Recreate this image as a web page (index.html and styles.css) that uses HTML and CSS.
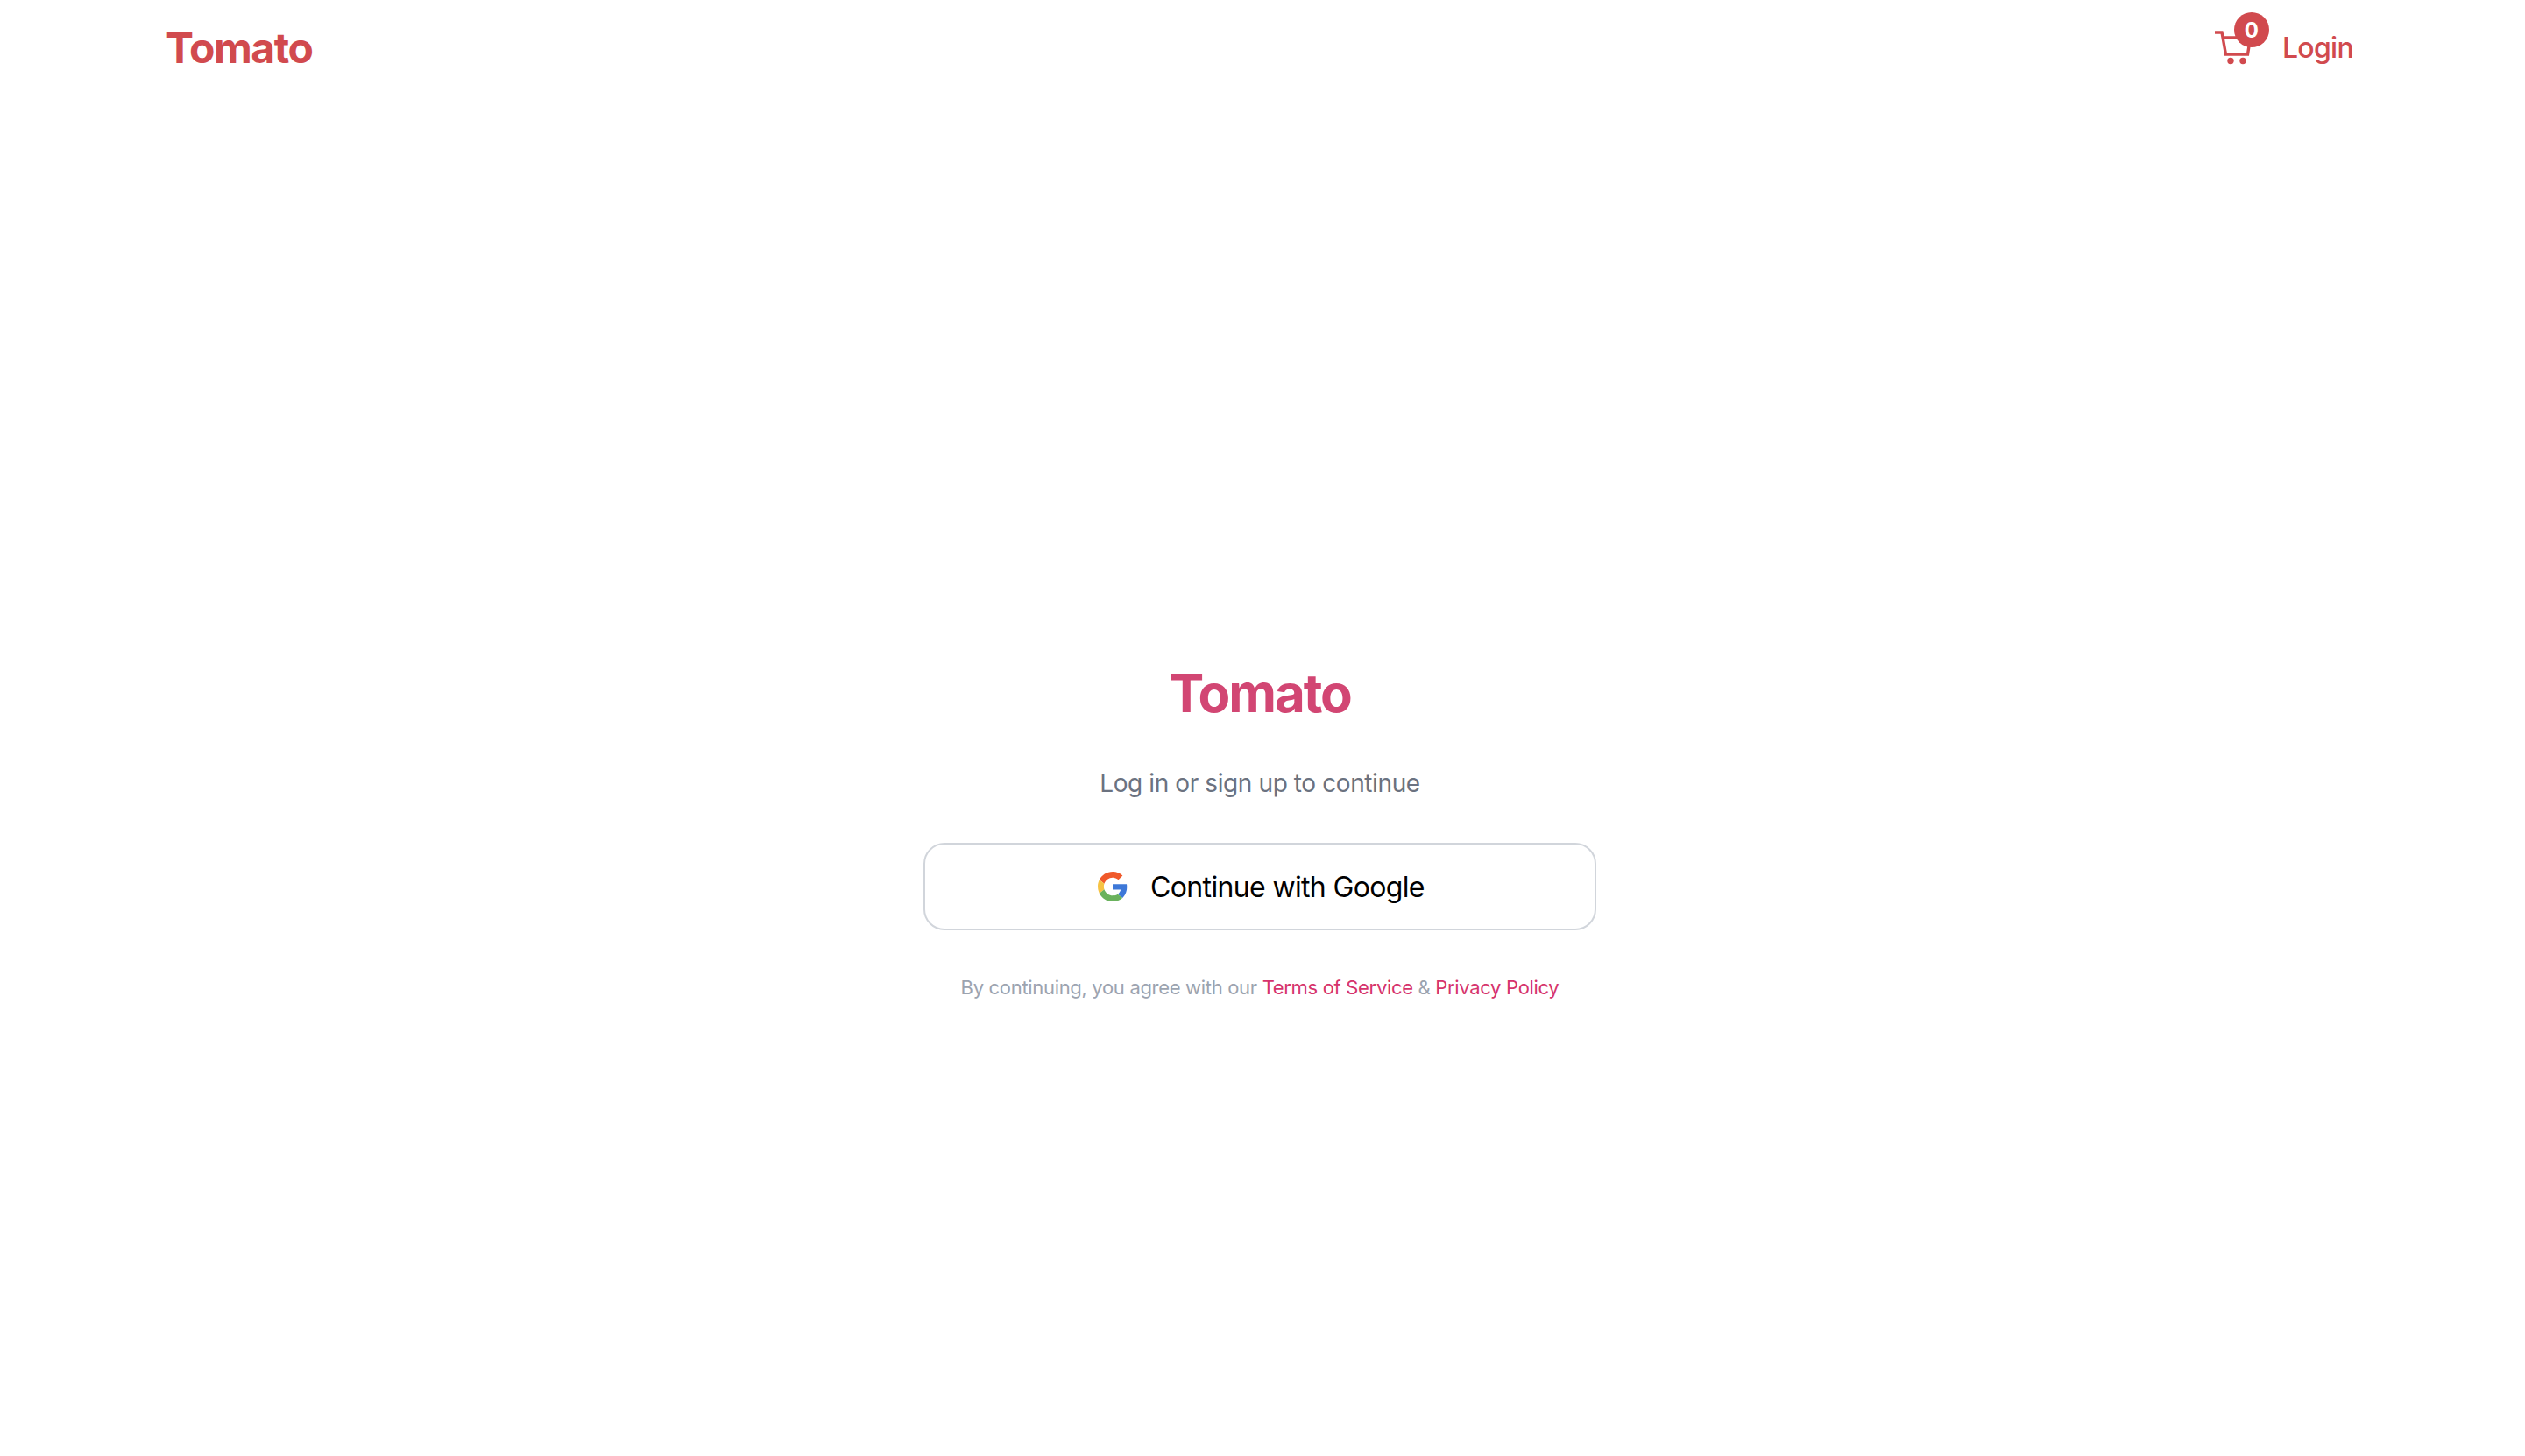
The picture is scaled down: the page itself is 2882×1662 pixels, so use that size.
FILE: index.html
```html
<!DOCTYPE html>
<html lang="en">
<head>
<meta charset="utf-8">
<title>Tomato</title>
<link rel="stylesheet" href="styles.css">
</head>
<body>
<header class="nav">
  <a class="brand">Tomato</a>
  <div class="nav-right">
    <span class="cart">
      <svg class="cart-icon" viewBox="0 0 40 40" fill="none" stroke="#d14a4e" stroke-width="3.4">
        <path d="M0 3h8l4.5 25h25l3-19H9.5"/>
        <circle cx="18" cy="35.5" r="3.7" fill="#d14a4e" stroke="none"/>
        <circle cx="32" cy="35.5" r="3.7" fill="#d14a4e" stroke="none"/>
      </svg>
      <span class="badge">0</span>
    </span>
    <a class="login">Login</a>
  </div>
</header>
<main class="auth">
  <h1 class="title">Tomato</h1>
  <p class="subtitle">Log in or sign up to continue</p>
  <button class="google-btn">
    <svg class="g-icon" viewBox="0 0 48 48">
      <path fill="#F0592A" d="M24 9.5c3.54 0 6.71 1.22 9.21 3.6l6.85-6.85C35.9 2.38 30.47 0 24 0 14.62 0 6.51 5.38 2.56 13.22l7.98 6.19C12.43 13.72 17.74 9.5 24 9.5z"/>
      <path fill="#3D78D8" d="M46.98 24.55c0-1.57-.15-3.09-.38-4.55H24v9.02h12.94c-.58 2.96-2.26 5.48-4.78 7.18l7.73 6c4.51-4.18 7.09-10.36 7.09-17.65z"/>
      <path fill="#F6C344" d="M10.53 28.59c-.48-1.45-.76-2.99-.76-4.59s.27-3.14.76-4.59l-7.98-6.19C.92 16.46 0 20.12 0 24c0 3.88.92 7.54 2.56 10.78l7.97-6.19z"/>
      <path fill="#6AB25D" d="M24 48c6.48 0 11.93-2.13 15.89-5.81l-7.73-6c-2.15 1.45-4.92 2.3-8.16 2.3-6.26 0-11.57-4.22-13.47-9.91l-7.98 6.19C6.51 42.62 14.62 48 24 48z"/>
    </svg>
    <span>Continue with Google</span>
  </button>
  <p class="legal">By continuing, you agree with our <a class="legal-link">Terms of Service</a> &amp; <a class="legal-link">Privacy Policy</a></p>
</main>
</body>
</html>
```

FILE: styles.css
```css
* { box-sizing: border-box; }
html, body { margin: 0; height: 100%; }
body {
  background: #fff;
  font-family: Inter, "Liberation Sans", sans-serif;
  display: flex;
  flex-direction: column;
  height: 1662px;
}
.nav {
  display: flex;
  align-items: center;
  justify-content: space-between;
  height: 108px;
  padding: 0 196px 0 189px;
  flex: none;
}
.brand {
  font-size: 48px;
  font-weight: 700;
  letter-spacing: -1.4px;
  color: #d14a4e;
}
.nav-right { display: flex; align-items: center; gap: 37px; }
.cart { position: relative; display: block; width: 40px; height: 40px; }
.cart-icon { display: block; width: 40px; height: 40px; overflow: visible; }
.badge {
  position: absolute;
  top: -20px;
  left: 22px;
  width: 40px;
  height: 40px;
  border-radius: 50%;
  background: #d14a4e;
  color: #fff;
  font-size: 24px;
  font-weight: 700;
  display: flex;
  align-items: center;
  justify-content: center;
}
.login { font-size: 32px; font-weight: 500; letter-spacing: -0.7px; color: #d14a4e; }
.auth {
  flex: 1;
  display: flex;
  flex-direction: column;
  align-items: center;
  padding: 647px 6px 0 0;
}
.title {
  margin: 0;
  font-size: 60px;
  line-height: 72px;
  font-weight: 700;
  letter-spacing: -2.1px;
  color: #d24673;
}
.subtitle {
  margin: 47px 0 0;
  font-size: 28px;
  line-height: 40px;
  letter-spacing: -0.4px;
  color: #6b7280;
}
.google-btn {
  margin-top: 48px;
  width: 768px;
  height: 100px;
  border: 2px solid #d1d5db;
  border-radius: 24px;
  background: #fff;
  display: flex;
  align-items: center;
  justify-content: center;
  gap: 26px;
  font-family: inherit;
  font-size: 32px;
  letter-spacing: -0.65px;
  color: #000;
  padding: 0 0 0 3px;
}
.g-icon { width: 34px; height: 34px; display: block; }
.legal {
  margin: 49px 0 0;
  font-size: 22px;
  line-height: 32px;
  letter-spacing: -0.32px;
  color: #9ca3af;
}
.legal-link { color: #d6336c; }
```
